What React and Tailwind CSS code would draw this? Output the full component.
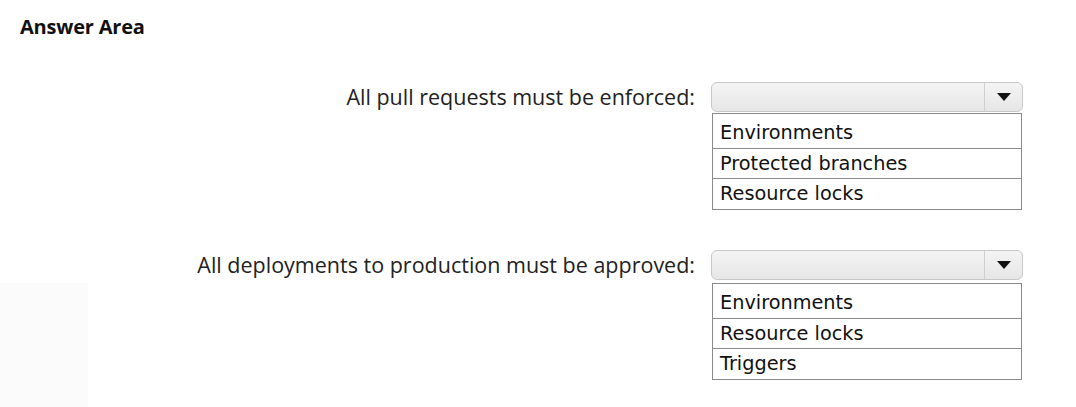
export default function App() {
  const label = { fontFamily: '"Open Sans", "Noto Sans", sans-serif' };
  const item = { fontFamily: '"DejaVu Sans", Verdana, sans-serif' };

  const Select = () => (
    <div className="flex h-[30px] w-[312px] rounded-[6px] border border-[#c8c8c8] bg-gradient-to-b from-[#f4f4f4] to-[#e6e6e6]">
      <div className="flex-1" />
      <div className="flex w-[38px] items-center justify-center border-l border-[#cfcfcf]">
        <svg width="14" height="8" viewBox="0 0 14 8">
          <path d="M0 0 H14 L7 8 Z" fill="#111" />
        </svg>
      </div>
    </div>
  );

  const rowCls = ["h-[34px] pt-[3px]", "h-[30px]", "h-[31px]"];

  const List = ({ items }) => (
    <div className="ml-[1px] w-[310px] border border-[#8a8a8a]" style={item}>
      {items.map((t, i) => (
        <div
          key={t}
          className={`flex items-center pl-[7px] text-[19.3px] leading-none text-[#111] ${rowCls[i]} ${
            i > 0 ? "border-t border-[#8a8a8a]" : ""
          }`}
        >
          {t}
        </div>
      ))}
    </div>
  );

  return (
    <div className="flex h-[407px] w-[1076px] flex-col bg-white">
      <div
        className="pl-[20px] pt-[14px] text-[20px] font-bold leading-[26px] tracking-[-0.2px] text-[#111]"
        style={label}
      >
        Answer Area
      </div>

      <div className="mt-[42px] flex">
        <div
          className="flex h-[30px] w-[711px] items-center justify-end pr-[16px] text-[21.5px] text-[#222]"
          style={label}
        >
          All pull requests must be enforced:
        </div>
        <div className="flex flex-col">
          <Select />
          <div className="mt-[1px]">
            <List items={["Environments", "Protected branches", "Resource locks"]} />
          </div>
        </div>
      </div>

      <div className="mt-[40px] flex flex-1">
        <div className="flex w-[711px] flex-col">
          <div
            className="flex h-[30px] items-center justify-end pr-[16px] text-[21.5px] text-[#222]"
            style={label}
          >
            All deployments to production must be approved:
          </div>
          <div className="mt-[3px] w-[88px] flex-1 bg-[#fbfbfb]" />
        </div>
        <div className="flex flex-col">
          <Select />
          <div className="mt-[3px]">
            <List items={["Environments", "Resource locks", "Triggers"]} />
          </div>
        </div>
      </div>
    </div>
  );
}
